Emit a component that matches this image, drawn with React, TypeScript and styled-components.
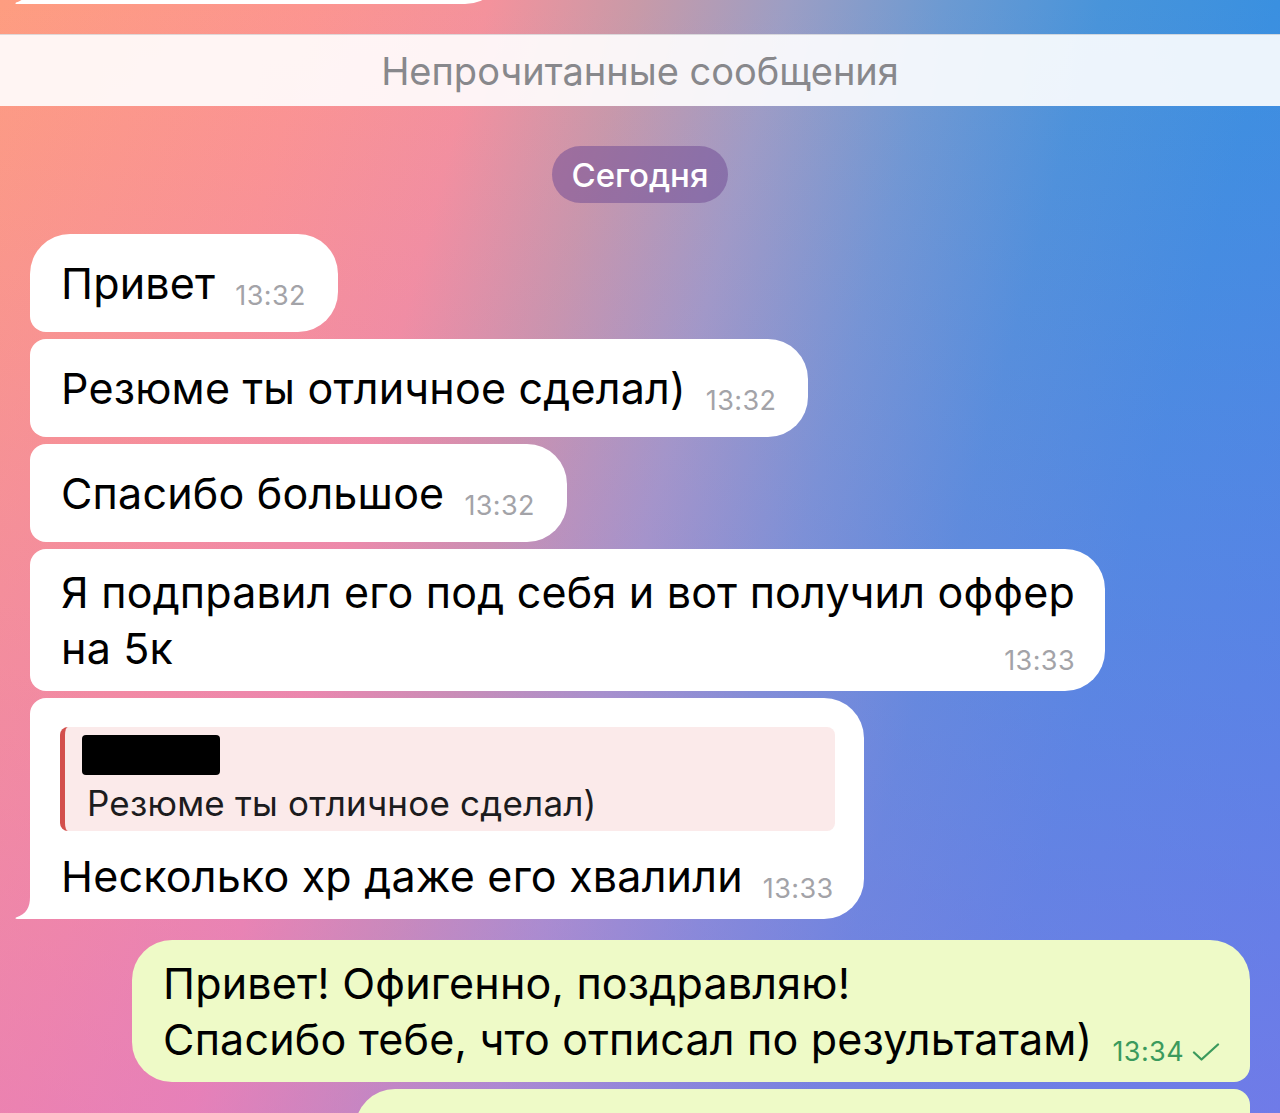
import React from "react";
import styled, { createGlobalStyle } from "styled-components";

const Global = createGlobalStyle`
  html, body { margin: 0; padding: 0; }
  body {
    width: 1280px;
    height: 1113px;
    overflow: hidden;
    font-family: Inter, "Noto Sans", "Liberation Sans", sans-serif;
    -webkit-font-smoothing: antialiased;
  }
`;

const Screen = styled.div`
  width: 1280px;
  height: 1113px;
  overflow: hidden;
  display: flex;
  flex-direction: column;
  background:
    linear-gradient(to bottom, rgba(206, 96, 236, 0) 0%, rgba(206, 96, 236, 0.36) 100%),
    linear-gradient(
      105deg,
      #fe9d80 0%,
      #fc9590 20%,
      #f4929c 31%,
      #c89aa8 40.5%,
      #9c9ec4 50%,
      #6c9ad2 60%,
      #4894da 70%,
      #3a90e0 81%,
      #3a8ae6 100%
    );
`;

const Row = styled.div<{ $out?: boolean; $gap?: number }>`
  display: flex;
  justify-content: ${(p) => (p.$out ? "flex-end" : "flex-start")};
  padding: 0 30px;
  margin-top: ${(p) => (p.$gap ?? 7)}px;
  flex-shrink: 0;
`;

type Radii = { $tl: number; $tr: number; $br: number; $bl: number };

const Bubble = styled.div<
  Radii & { $out?: boolean; $multi?: boolean; $w?: number; $h?: number }
>`
  position: relative;
  display: flow-root;
  box-sizing: border-box;
  background: ${(p) => (p.$out ? "#eefac7" : "#ffffff")};
  border-radius: ${(p) => `${p.$tl}px ${p.$tr}px ${p.$br}px ${p.$bl}px`};
  padding: ${(p) => (p.$multi ? "15px 30px 15px 31px" : "21px 32px 21px 31px")};
  font-size: 43px;
  line-height: 56px;
  letter-spacing: 0.2px;
  color: #000;
  ${(p) => (p.$w ? `width: ${p.$w}px;` : "")}
  ${(p) => (p.$h ? `height: ${p.$h}px;` : "")}
`;

const Meta = styled.span<{ $out?: boolean }>`
  float: right;
  display: inline-flex;
  align-items: center;
  gap: 8px;
  margin: 28px 0 0 20px;
  font-size: 27px;
  line-height: 26px;
  letter-spacing: 0.4px;
  color: ${(p) => (p.$out ? "#3b9a5d" : "#a3a3a8")};
`;

const TailSvg = styled.svg`
  position: absolute;
  left: -16px;
  bottom: 0;
  width: 20px;
  height: 22px;
`;

const UnreadBar = styled.div`
  margin-top: 30px;
  height: 71px;
  flex-shrink: 0;
  display: flex;
  align-items: center;
  justify-content: center;
  background: rgba(255, 255, 255, 0.9);
  border-top: 1px solid rgba(110, 110, 120, 0.22);
  font-size: 38px;
  color: #88888c;
`;

const DateRow = styled.div`
  display: flex;
  justify-content: center;
  margin-top: 40px;
  flex-shrink: 0;
`;

const DatePill = styled.div`
  height: 57px;
  padding: 0 19px;
  display: flex;
  align-items: center;
  border-radius: 29px;
  background: rgba(115, 78, 150, 0.55);
  color: #fff;
  font-size: 33px;
  font-weight: 500;
`;

const Reply = styled.div`
  display: flex;
  flex-direction: column;
  gap: 8px;
  margin: 14px -1px 17px -1px;
  padding: 8px 20px 8px 17px;
  background: #fbeaea;
  border-left: 5px solid #d34f4c;
  border-radius: 8px;
`;

const Redacted = styled.div`
  width: 138px;
  height: 40px;
  background: #000;
  border-radius: 4px;
`;

const ReplyText = styled.div`
  margin-left: 5px;
  font-size: 35px;
  line-height: 40px;
  letter-spacing: 0.2px;
  color: #1c1c1e;
`;

const Check = () => (
  <svg width="28" height="18" viewBox="0 0 28 18" fill="none">
    <polyline
      points="2,9.5 9.5,16.5 26,1.5"
      stroke="currentColor"
      strokeWidth="2.3"
      strokeLinecap="round"
      strokeLinejoin="round"
    />
  </svg>
);

const Tail = ({ fill }: { fill: string }) => (
  <TailSvg viewBox="0 0 20 22">
    <path d="M16 0 C16 10 12.5 17 2 20.6 Q0.5 22 3 22 L20 22 L20 0 Z" fill={fill} />
  </TailSvg>
);

export default function App() {
  return (
    <>
      <Global />
      <Screen>
        <Row $gap={-94}>
          <Bubble $tl={16} $tr={40} $br={40} $bl={0} $w={475} $h={98}>
            <Tail fill="#ffffff" />
          </Bubble>
        </Row>

        <UnreadBar>Непрочитанные сообщения</UnreadBar>

        <DateRow>
          <DatePill>Сегодня</DatePill>
        </DateRow>

        <Row $gap={31}>
          <Bubble $tl={40} $tr={40} $br={40} $bl={16}>
            Привет<Meta>13:32</Meta>
          </Bubble>
        </Row>
        <Row>
          <Bubble $tl={16} $tr={40} $br={40} $bl={16}>
            Резюме ты отличное сделал)<Meta>13:32</Meta>
          </Bubble>
        </Row>
        <Row>
          <Bubble $tl={16} $tr={40} $br={40} $bl={16}>
            Спасибо большое<Meta>13:32</Meta>
          </Bubble>
        </Row>
        <Row>
          <Bubble $tl={16} $tr={40} $br={40} $bl={16} $multi>
            Я подправил его под себя и вот получил оффер
            <br />
            на 5к<Meta>13:33</Meta>
          </Bubble>
        </Row>
        <Row>
          <Bubble $tl={16} $tr={40} $br={40} $bl={0} $multi>
            <Reply>
              <Redacted />
              <ReplyText>Резюме ты отличное сделал)</ReplyText>
            </Reply>
            Несколько хр даже его хвалили<Meta>13:33</Meta>
            <Tail fill="#ffffff" />
          </Bubble>
        </Row>

        <Row $out $gap={21}>
          <Bubble $out $multi $tl={40} $tr={40} $br={16} $bl={40}>
            Привет! Офигенно, поздравляю!
            <br />
            Спасибо тебе, что отписал по результатам)
            <Meta $out>
              13:34
              <Check />
            </Meta>
          </Bubble>
        </Row>
        <Row $out>
          <Bubble $out $tl={40} $tr={16} $br={40} $bl={40} $w={895} $h={98} />
        </Row>
      </Screen>
    </>
  );
}
